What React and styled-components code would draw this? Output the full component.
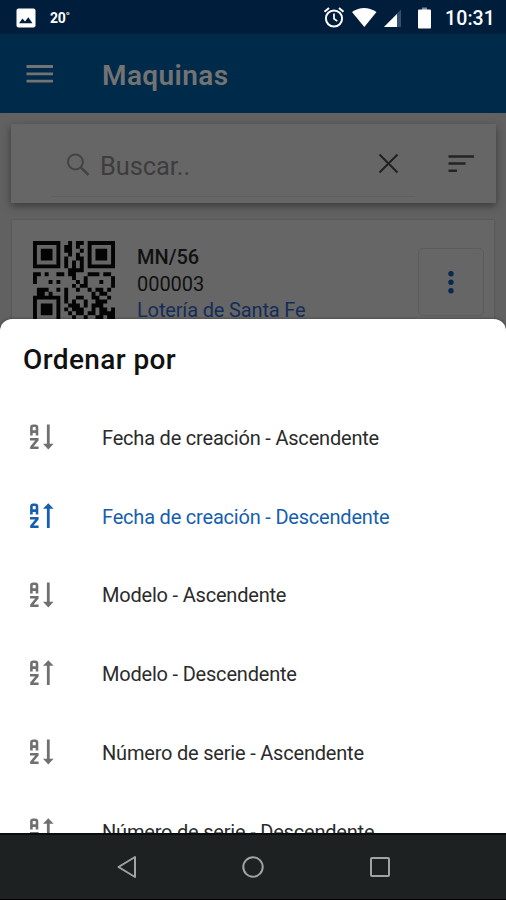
import React from "react";
import styled, { createGlobalStyle } from "styled-components";

const GlobalStyle = createGlobalStyle`
  * { box-sizing: border-box; }
  body { margin: 0; background: #626262; font-family: Roboto, sans-serif; }
`;

const Screen = styled.div`
  display: flex;
  flex-direction: column;
  width: 506px;
  height: 900px;
  overflow: hidden;
`;

const StatusBar = styled.header`
  display: flex;
  flex: none;
  align-items: center;
  height: 34px;
  padding: 2px 11px 0 16px;
  background: #001d3b;
  color: #fff;
  svg { flex: none; display: block; }
`;

const Temperature = styled.span`
  margin-left: 14px;
  font-size: 14px;
  font-weight: 700;
  letter-spacing: -0.3px;
`;

const SystemIcons = styled.div`
  display: flex;
  gap: 13px;
  margin-left: auto;
`;

const Clock = styled.span`
  margin-left: 13px;
  font-size: 19.5px;
  font-weight: 500;
  letter-spacing: 0.1px;
`;

const Viewport = styled.main`
  position: relative;
  flex: none;
  height: 799px;
  overflow: hidden;
  background: #616161;
`;

const AppBar = styled.div`
  display: flex;
  align-items: center;
  gap: 49px;
  height: 79px;
  padding: 0 26px;
  background: #002a4a;
  color: #737373;
`;

const PageTitle = styled.h1`
  margin: 3px 0 0;
  font-size: 28px;
  font-weight: 600;
  letter-spacing: 0.4px;
`;

const SearchCard = styled.div`
  display: flex;
  align-items: center;
  height: 79px;
  margin: 11px 10px 0 11px;
  padding: 0 21px 0 40px;
  background: #666;
  box-shadow: 0 3px 8px rgba(0, 0, 0, 0.4);
  svg { flex: none; }
`;

const SearchField = styled.div`
  display: flex;
  align-items: center;
  width: 365px;
  height: 70px;
  margin-top: -3px;
  padding: 4px 16px 0 14px;
  border-bottom: 1px solid #5f5f5f;
  color: #3d3d3d;
`;

const Placeholder = styled.span`
  flex: 1;
  margin: 5px 0 0 9px;
  font-size: 25.5px;
  letter-spacing: -0.1px;
`;

const MachineCard = styled.article`
  display: flex;
  height: 190px;
  margin: 17px 12px 0;
  padding: 21px 0 0 21px;
  background: #666;
  box-shadow: 0 0 2px rgba(0, 0, 0, 0.2);
`;

const MachineInfo = styled.div`
  flex: 1;
  margin: 3px 0 0 22px;
  color: #111;
  font-size: 20px;
  line-height: 26.7px;
`;

const Model = styled.div`
  font-weight: 500;
  letter-spacing: 0;
`;

const Serial = styled.div`
  letter-spacing: -0.05px;
`;

const Owner = styled.div`
  color: #152d59;
  letter-spacing: -0.15px;
`;

const MoreButton = styled.button`
  display: flex;
  align-items: center;
  justify-content: center;
  width: 66px;
  height: 68px;
  margin: 7px 10px 0 0;
  padding: 0;
  border: 1px solid #5c5c5c;
  border-radius: 5px;
  background: transparent;
`;

const Sheet = styled.section`
  position: absolute;
  inset: 285px 0 0;
  overflow: hidden;
  border-radius: 12px 12px 0 0;
  background: #fff;
  box-shadow: 0 0 3px rgba(0, 0, 0, 0.45);
`;

const SheetTitle = styled.h2`
  margin: 0;
  height: 79px;
  padding: 0 23px;
  color: #111;
  font-size: 28px;
  font-weight: 500;
  line-height: 82px;
  letter-spacing: 0.4px;
`;

const Option = styled.div`
  display: flex;
  align-items: center;
  height: 78.7px;
  padding-left: 29px;
  color: ${(p) => (p.$active ? "#165fae" : "#2b2b2b")};
  font-size: 20px;
  white-space: nowrap;
  svg { flex: none; margin-right: 47px; color: ${(p) => (p.$active ? "#165fae" : "#707070")}; }
`;

const OptionLabel = styled.span`
  margin-top: 1.5px;
  letter-spacing: -0.2px;
`;

const NavBar = styled.nav`
  display: flex;
  flex: none;
  align-items: center;
  justify-content: center;
  gap: 104.5px;
  height: 67px;
  border-top: 2px solid #0a0d0e;
  border-bottom: 1px solid #000;
  background: #1d2121;
`;

const QR_ROWS = [
  "#######..#.##.#######",
  "#.....#.##.#..#.....#",
  "#.###.#.##..#.#.###.#",
  "#.###.#..#.#..#.###.#",
  "#.###.#.#..##.#.###.#",
  "#.....#.#.#.#.#.....#",
  "#######.#.#.#.#######",
  ".........####........",
  "##.#..##.##...###.##.",
  "#.........#..#......#",
  "#...#.#....#.#...#..#",
  "..........#.##......#",
  ".###..#.#..#..#.##.#.",
  ".##.#...#......#.##..",
  "#######.#..##..##..#.",
  "#.....#.#.#..#..###..",
  "#.###.#..###.#.###...",
  "#.###.#.#.###..#.##.#",
  "#.###.#..#.##.##.####",
  "#.....#...#..#..##.##",
  "#######.##.###.#..#..",
];

const QR_PATH = QR_ROWS.map((row, y) =>
  [...row].map((cell, x) => (cell === "#" ? `M${x} ${y}h1v1h-1z` : "")).join("")
).join("");

function QrCode() {
  return (
    <svg width="82" height="82" viewBox="0 0 21 21">
      <path d={QR_PATH} fill="#040404" />
    </svg>
  );
}

function SortIcon({ descending }) {
  return (
    <svg width="26" height="28" viewBox="0 0 26 28" fill="none" stroke="currentColor">
      <path d="M2.4 12.5V4.5Q2.4 2.7 4.2 2.7H6.2Q8 2.7 8 4.5V12.5M2.4 8.6H8" strokeWidth="2.6" />
      <path d="M1 16.2H8.3V17L2.5 24V24.8H9.6" strokeWidth="2.6" />
      {descending ? (
        <>
          <path d="M19.3 26V4" strokeWidth="2.8" />
          <path d="M14 6.8L19.3 1.2L24.6 6.8Z" fill="currentColor" stroke="none" />
        </>
      ) : (
        <>
          <path d="M19.3 1.5V24" strokeWidth="2.8" />
          <path d="M14 20.8L19.3 26.4L24.6 20.8Z" fill="currentColor" stroke="none" />
        </>
      )}
    </svg>
  );
}

const OPTIONS = [
  { label: "Fecha de creación - Ascendente" },
  { label: "Fecha de creación - Descendente", descending: true, active: true },
  { label: "Modelo - Ascendente" },
  { label: "Modelo - Descendente", descending: true },
  { label: "Número de serie - Ascendente" },
  { label: "Número de serie - Descendente", descending: true },
];

export default function App() {
  return (
    <Screen>
      <GlobalStyle />
      <StatusBar>
        <svg width="20" height="20" viewBox="0 0 20 20">
          <rect x="0.5" y="0.5" width="19" height="19" rx="2" fill="#fff" />
          <path d="M3 15.2L6.5 10.5L9 13.4L12.3 9.3L16.5 15.2Z" fill="#001d3b" />
        </svg>
        <Temperature>20˚</Temperature>
        <SystemIcons>
          <svg width="82" height="24" viewBox="0 0 82 24">
            <g fill="none" stroke="#fff">
              <circle cx="11" cy="12.5" r="8.1" strokeWidth="2" />
              <path d="M11 7.5V12.8L14.3 15.1" strokeWidth="1.7" />
              <path d="M1.5 5.8L6 2.1M20.5 5.8L16 2.1" strokeWidth="2" />
            </g>
            <path d="M29 6Q41 -2 53.5 6L41.3 21Z" fill="#fff" />
            <path d="M61 21V20.5L78 3.5V21Z" fill="#34516f" />
            <path d="M61 21L74 8V21Z" fill="#fff" />
          </svg>
          <svg width="14" height="24" viewBox="0 0 14 24">
            <path d="M4 1.5H9V4H4Z" fill="#7b8da1" />
            <rect x="0" y="3.5" width="13" height="19" rx="1" fill="#fff" />
          </svg>
        </SystemIcons>
        <Clock>10:31</Clock>
      </StatusBar>
      <Viewport>
        <AppBar>
          <svg width="27" height="20" viewBox="0 0 27 20" stroke="currentColor" strokeWidth="2.8">
            <path d="M0.5 2.5H27M0.5 9.8H27M0.5 17.2H27" />
          </svg>
          <PageTitle>Maquinas</PageTitle>
        </AppBar>
        <SearchCard>
          <SearchField>
            <svg width="26" height="26" viewBox="0 0 26 26" fill="none" stroke="#444" strokeWidth="2">
              <circle cx="10.4" cy="10.9" r="7.5" />
              <path d="M15.8 16.3L23.5 24" strokeWidth="2.5" />
            </svg>
            <Placeholder>Buscar..</Placeholder>
            <svg width="22" height="22" viewBox="0 0 22 22" stroke="#202020" strokeWidth="2">
              <path d="M2.5 1.5L20.5 19.5M20.5 1.5L2.5 19.5" />
            </svg>
          </SearchField>
          <svg width="60" height="20" viewBox="0 0 60 20" stroke="#242424" strokeWidth="2.6">
            <path d="M33.5 2.5H59M33.5 9.5H50.5M33.5 16.7H42" />
          </svg>
        </SearchCard>
        <MachineCard>
          <QrCode />
          <MachineInfo>
            <Model>MN/56</Model>
            <Serial>000003</Serial>
            <Owner>Lotería de Santa Fe</Owner>
          </MachineInfo>
          <MoreButton aria-label="Opciones">
            <svg width="8" height="26" viewBox="0 0 8 26" fill="#06294f">
              <circle cx="4" cy="4.8" r="2.7" />
              <circle cx="4" cy="13.3" r="2.7" />
              <circle cx="4" cy="21.8" r="2.7" />
            </svg>
          </MoreButton>
        </MachineCard>
        <Sheet>
          <SheetTitle>Ordenar por</SheetTitle>
          {OPTIONS.map((o) => (
            <Option key={o.label} $active={o.active}>
              <SortIcon descending={o.descending} />
              <OptionLabel>{o.label}</OptionLabel>
            </Option>
          ))}
        </Sheet>
      </Viewport>
      <NavBar>
        <svg width="22" height="24" viewBox="0 0 22 24" fill="none" stroke="#a0a4a4" strokeWidth="2" strokeLinejoin="round">
          <path d="M19 2V22L2.5 12Z" />
        </svg>
        <svg width="22" height="24" viewBox="0 0 22 24" fill="none" stroke="#a0a4a4" strokeWidth="2">
          <circle cx="11" cy="12" r="9.7" />
        </svg>
        <svg width="22" height="24" viewBox="0 0 22 24" fill="none" stroke="#a0a4a4" strokeWidth="2">
          <rect x="2" y="3" width="18" height="18" rx="1" />
        </svg>
      </NavBar>
    </Screen>
  );
}
